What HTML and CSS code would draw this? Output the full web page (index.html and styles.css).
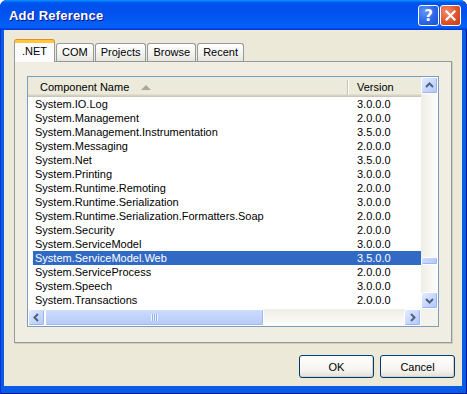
FILE: index.html
```html
<!DOCTYPE html>
<html lang="en">
<head>
    <meta charset="UTF-8">
    <title>Add Reference</title>
    <link rel="stylesheet" href="styles.css">
</head>
<body>
    <div class="window">
        <div class="titlebar">
            <span class="title">Add Reference</span>
            <div class="caption-btns">
                <div class="cbtn help">?</div>
                <div class="cbtn close">
                    <svg width="11" height="11" viewBox="0 0 11 11"><path d="M1.5 1.5 L9.5 9.5 M9.5 1.5 L1.5 9.5" stroke="#fff" stroke-width="2.2" stroke-linecap="square"/></svg>
                </div>
            </div>
        </div>

        <div class="client">
            <div class="tabs">
                <div class="tab active">.NET</div>
                <div class="tab">COM</div>
                <div class="tab">Projects</div>
                <div class="tab">Browse</div>
                <div class="tab">Recent</div>
            </div>

            <div class="panel">
                <div class="listbox">
                    <div class="lv-main">
                        <div class="lv-header">
                            <div class="col-name">Component Name <span class="sort-arrow"></span></div>
                            <div class="col-ver">Version</div>
                        </div>
                        <div class="lv-rows">
                            <div class="row"><span class="name">System.IO.Log</span><span class="ver">3.0.0.0</span></div>
                            <div class="row"><span class="name">System.Management</span><span class="ver">2.0.0.0</span></div>
                            <div class="row"><span class="name">System.Management.Instrumentation</span><span class="ver">3.5.0.0</span></div>
                            <div class="row"><span class="name">System.Messaging</span><span class="ver">2.0.0.0</span></div>
                            <div class="row"><span class="name">System.Net</span><span class="ver">3.5.0.0</span></div>
                            <div class="row"><span class="name">System.Printing</span><span class="ver">3.0.0.0</span></div>
                            <div class="row"><span class="name">System.Runtime.Remoting</span><span class="ver">2.0.0.0</span></div>
                            <div class="row"><span class="name">System.Runtime.Serialization</span><span class="ver">3.0.0.0</span></div>
                            <div class="row"><span class="name">System.Runtime.Serialization.Formatters.Soap</span><span class="ver">2.0.0.0</span></div>
                            <div class="row"><span class="name">System.Security</span><span class="ver">2.0.0.0</span></div>
                            <div class="row"><span class="name">System.ServiceModel</span><span class="ver">3.0.0.0</span></div>
                            <div class="row selected"><span class="name">System.ServiceModel.Web</span><span class="ver">3.5.0.0</span></div>
                            <div class="row"><span class="name">System.ServiceProcess</span><span class="ver">2.0.0.0</span></div>
                            <div class="row"><span class="name">System.Speech</span><span class="ver">3.0.0.0</span></div>
                            <div class="row"><span class="name">System.Transactions</span><span class="ver">2.0.0.0</span></div>
                        </div>
                        <div class="hscroll">
                            <div class="sb-btn">
                                <svg width="9" height="9" viewBox="0 0 9 9"><path d="M6 1 L2.5 4.5 L6 8" fill="none" stroke="#4D6185" stroke-width="2"/></svg>
                            </div>
                            <div class="h-track">
                                <div class="h-thumb">
                                    <span class="grip"></span>
                                </div>
                            </div>
                            <div class="sb-btn">
                                <svg width="9" height="9" viewBox="0 0 9 9"><path d="M3 1 L6.5 4.5 L3 8" fill="none" stroke="#4D6185" stroke-width="2"/></svg>
                            </div>
                        </div>
                    </div>
                    <div class="vscroll">
                        <div class="sb-btn">
                            <svg width="9" height="9" viewBox="0 0 9 9"><path d="M1 6 L4.5 2.5 L8 6" fill="none" stroke="#4D6185" stroke-width="2"/></svg>
                        </div>
                        <div class="v-track">
                            <div class="v-thumb"></div>
                        </div>
                        <div class="sb-btn">
                            <svg width="9" height="9" viewBox="0 0 9 9"><path d="M1 3 L4.5 6.5 L8 3" fill="none" stroke="#4D6185" stroke-width="2"/></svg>
                        </div>
                        <div class="corner"></div>
                    </div>
                </div>
            </div>

            <div class="buttons">
                <button class="btn">OK</button>
                <button class="btn">Cancel</button>
            </div>
        </div>
    </div>
</body>
</html>
```

FILE: styles.css
```css
body {
    margin: 0;
    background: #fff;
    font-family: "Liberation Sans", Arial, sans-serif;
    font-size: 11px;
    color: #000;
}

.window {
    width: 467px;
    height: 394px;
    display: flex;
    flex-direction: column;
    background: #0A5BE6;
    border-radius: 7px 7px 0 0;
    box-shadow: inset 1px 0 #0831D9, inset -1px -1px #00138C;
}

/* title bar */
.titlebar {
    height: 30px;
    flex: none;
    display: flex;
    align-items: center;
    padding: 0 6px 0 9px;
    border-radius: 7px 7px 0 0;
    background: linear-gradient(to bottom, #0997FF 0%, #0053EE 9%, #0050EE 40%, #0560F5 85%, #005BFF 92%, #003DD7 97%, #003DD7 100%);
}
.title {
    color: #fff;
    font-weight: bold;
    font-size: 13px;
    text-shadow: 1px 1px #0F1089;
    letter-spacing: 0.2px;
}
.caption-btns {
    margin-left: auto;
    display: flex;
    gap: 1px;
    margin-top: 1px;
}
.cbtn {
    width: 21px;
    height: 21px;
    box-sizing: border-box;
    border: 1px solid #fff;
    border-radius: 3px;
    display: flex;
    align-items: center;
    justify-content: center;
}
.help {
    color: #fff;
    font-weight: bold;
    font-size: 15px;
    font-family: "DejaVu Sans", sans-serif;
    background: radial-gradient(circle at 30% 30%, #5E93F7 0%, #2A66E9 55%, #1D4FD1 100%);
}
.close {
    background: radial-gradient(circle at 30% 30%, #F08D6C 0%, #E0542B 55%, #C43A14 100%);
}

/* client area */
.client {
    flex: 1;
    margin: 0 5px 8px 4px;
    background: #ECE9D8;
    display: flex;
    flex-direction: column;
    padding: 10px 10px 0 10px;
}

.tabs {
    display: flex;
    align-items: flex-end;
    height: 21px;
}
.tab {
    position: relative;
    height: 18px;
    box-sizing: border-box;
    padding: 0 5px;
    line-height: 17px;
    border: 1px solid #919B9C;
    border-bottom: none;
    border-radius: 3px 3px 0 0;
    background: linear-gradient(to bottom, #FFFFFF, #F3F2EE 60%, #E5E4DC);
}
.tab + .tab {
    margin-left: 1px;
}
.tab.active {
    height: 22px;
    margin-bottom: -1px;
    z-index: 1;
    padding: 0 7px;
    line-height: 16px;
    border-top: 3px solid #FFC83C;
    background: #FCFCFE;
    box-shadow: 0 -1px #E68B2C;
}

.panel {
    height: 282px;
    box-sizing: border-box;
    border: 1px solid #919B9C;
    background: #F0EEE2;
    box-shadow: 1px 1px 0 #D0CDBD;
    padding: 14px 12px;
}

/* list view */
.listbox {
    width: 412px;
    height: 251px;
    box-sizing: border-box;
    border: 1px solid #7F9DB9;
    background: #fff;
    display: flex;
}
.lv-main {
    width: 393px;
    display: flex;
    flex-direction: column;
}
.lv-header {
    height: 20px;
    flex: none;
    display: flex;
    align-items: center;
    background: #EBEADB;
    box-shadow: inset 0 -1px #CBC7B8, inset 0 -2px #D6D2C2, inset 0 -3px #E2DECD;
}
.col-name {
    width: 320px;
    padding-left: 12px;
    box-sizing: border-box;
    height: 15px;
    line-height: 15px;
    border-right: 1px solid #C7C5B2;
    display: flex;
    align-items: center;
}
.col-ver {
    padding-left: 8px;
    height: 15px;
    line-height: 15px;
    border-left: 1px solid #fff;
}
.sort-arrow {
    display: inline-block;
    margin-left: 12px;
    width: 0;
    height: 0;
    border-left: 5px solid transparent;
    border-right: 5px solid transparent;
    border-bottom: 5px solid #ACA899;
}

.lv-rows {
    flex: 1;
    overflow: hidden;
}
.row {
    display: flex;
    height: 14px;
    line-height: 14px;
    margin-left: 5px;
    padding-left: 2px;
    white-space: nowrap;
}
.row .name {
    width: 322px;
    flex: none;
}
.row.selected {
    background: #316AC5;
    color: #fff;
}

/* scroll bars */
.sb-btn {
    width: 17px;
    height: 17px;
    flex: none;
    box-sizing: border-box;
    border: 1px solid #fff;
    border-radius: 2px;
    background: linear-gradient(135deg, #E2EBFE, #C4D5FC 60%, #B1C6F7);
    box-shadow: inset -1px -1px #9DB5EE;
    display: flex;
    align-items: center;
    justify-content: center;
}
.hscroll {
    height: 17px;
    flex: none;
    display: flex;
    background: linear-gradient(to bottom, #EEEDE5, #FEFEFB);
}
.h-track {
    flex: 1;
    display: flex;
}
.h-thumb {
    width: 219px;
    box-sizing: border-box;
    border: 1px solid #fff;
    border-radius: 2px;
    background: linear-gradient(to bottom, #CDDCFD, #C1D3FB 50%, #B6CAF8);
    box-shadow: inset -1px -1px #A0B8EE;
    display: flex;
    align-items: center;
    justify-content: center;
}
.grip {
    width: 7px;
    height: 7px;
    background: repeating-linear-gradient(to right, #EEF4FE 0 1px, #8CB0F8 1px 2px);
}

.vscroll {
    width: 17px;
    display: flex;
    flex-direction: column;
    background: linear-gradient(to right, #EEEDE5, #FEFEFB);
}
.v-track {
    flex: 1;
}
.v-thumb {
    margin-top: 163px;
    height: 8px;
    box-sizing: border-box;
    border: 1px solid #fff;
    border-radius: 2px;
    background: linear-gradient(to right, #CDDCFD, #C1D3FB 50%, #B6CAF8);
    box-shadow: inset -1px -1px #A0B8EE;
}
.corner {
    height: 17px;
    flex: none;
    background: #F3F2EC;
}

/* dialog buttons */
.buttons {
    display: flex;
    justify-content: flex-end;
    gap: 6px;
    margin-top: 12px;
    margin-right: -3px;
}
.btn {
    width: 75px;
    height: 23px;
    font-family: "Liberation Sans", Arial, sans-serif;
    font-size: 11px;
    color: #000;
    border: 1px solid #003C74;
    border-radius: 3px;
    background: linear-gradient(to bottom, #FFFFFF, #F4F3EE 70%, #E3DFD3);
    box-shadow: inset -1px -1px #D6D0C5;
    padding: 0;
}
```
